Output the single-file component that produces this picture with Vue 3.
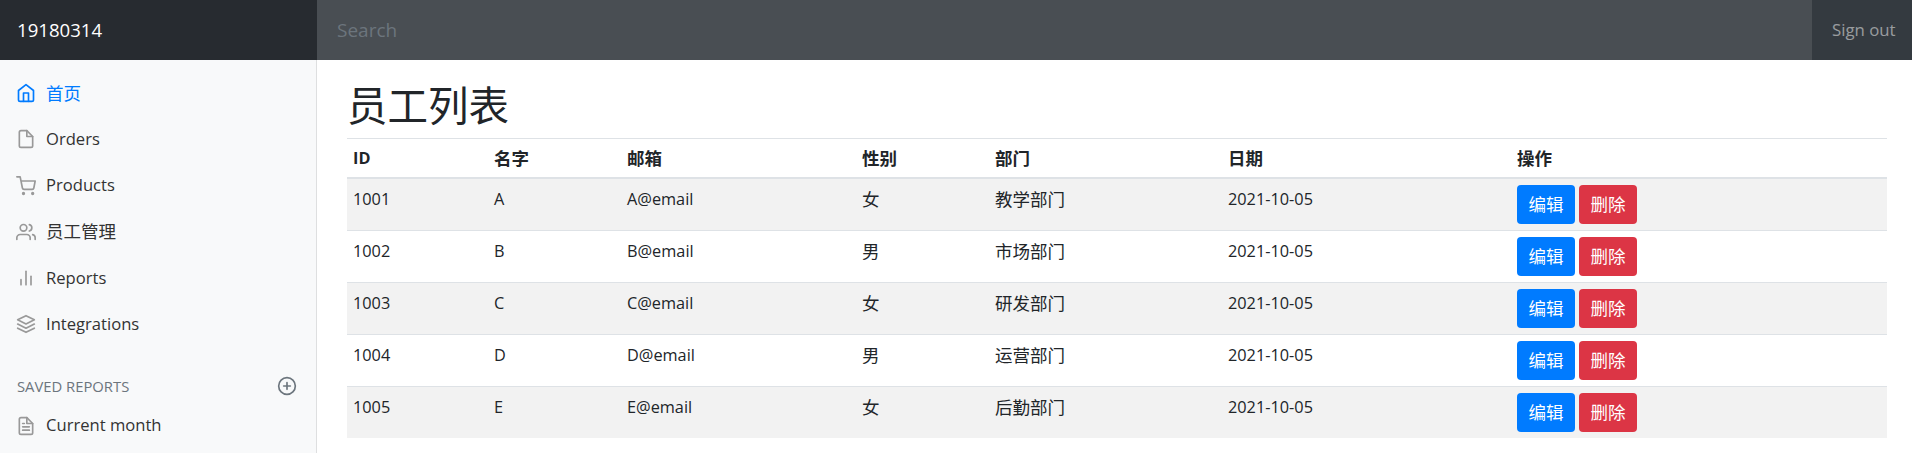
<template>
  <div class="page">
    <header class="navbar">
      <a class="brand">19180314</a>
      <input class="search" type="text" placeholder="Search" />
      <a class="signout">Sign out</a>
    </header>
    <div class="body-row">
      <nav class="sidebar">
        <ul class="nav">
          <li v-for="item in navItems" :key="item.label" class="nav-link" :class="{ active: item.active }">
            <svg class="icon" viewBox="0 0 24 24" v-html="icons[item.icon]"></svg>
            <span :class="{ cjk: item.cjk }">{{ item.label }}</span>
          </li>
        </ul>
        <h6 class="sidebar-heading">
          <span>Saved reports</span>
          <svg class="icon add" viewBox="0 0 24 24" v-html="icons.plus"></svg>
        </h6>
        <ul class="nav">
          <li class="nav-link">
            <svg class="icon" viewBox="0 0 24 24" v-html="icons.fileText"></svg>
            <span>Current month</span>
          </li>
        </ul>
      </nav>
      <main class="main">
        <h2 class="title">员工列表</h2>
        <table class="table">
          <colgroup>
            <col v-for="w in colWidths" :key="w.key" :style="{ width: w.value + 'px' }" />
          </colgroup>
          <thead>
            <tr>
              <th>ID</th>
              <th class="cjk">名字</th>
              <th class="cjk">邮箱</th>
              <th class="cjk">性别</th>
              <th class="cjk">部门</th>
              <th class="cjk">日期</th>
              <th class="cjk">操作</th>
            </tr>
          </thead>
          <tbody>
            <tr v-for="row in employees" :key="row.id">
              <td>{{ row.id }}</td>
              <td>{{ row.name }}</td>
              <td>{{ row.email }}</td>
              <td class="cjk">{{ row.gender }}</td>
              <td class="cjk">{{ row.dept }}</td>
              <td>{{ row.date }}</td>
              <td class="actions">
                <button class="btn primary">编辑</button>
                <button class="btn danger">删除</button>
              </td>
            </tr>
          </tbody>
        </table>
      </main>
    </div>
  </div>
</template>

<script setup>
const fileBase = '<path d="M13 2H6a2 2 0 0 0-2 2v16a2 2 0 0 0 2 2h12a2 2 0 0 0 2-2V9z"/><polyline points="13 2 13 9 20 9"/>'

const icons = {
  home: '<path d="M3 9l9-7 9 7v11a2 2 0 0 1-2 2H5a2 2 0 0 1-2-2z"/><polyline points="9 22 9 12 15 12 15 22"/>',
  file: fileBase,
  cart: '<circle cx="9" cy="21" r="1"/><circle cx="20" cy="21" r="1"/><path d="M1 1h4l2.68 13.39a2 2 0 0 0 2 1.61h9.72a2 2 0 0 0 2-1.61L23 6H6"/>',
  users: '<path d="M17 21v-2a4 4 0 0 0-4-4H5a4 4 0 0 0-4 4v2"/><circle cx="9" cy="7" r="4"/><path d="M23 21v-2a4 4 0 0 0-3-3.87"/><path d="M16 3.13a4 4 0 0 1 0 7.75"/>',
  bars: '<line x1="18" y1="20" x2="18" y2="10"/><line x1="12" y1="20" x2="12" y2="4"/><line x1="6" y1="20" x2="6" y2="14"/>',
  layers: '<polygon points="12 2 2 7 12 12 22 7 12 2"/><polyline points="2 17 12 22 22 17"/><polyline points="2 12 12 17 22 12"/>',
  plus: '<circle cx="12" cy="12" r="10"/><line x1="12" y1="8" x2="12" y2="16"/><line x1="8" y1="12" x2="16" y2="12"/>',
  fileText: fileBase + '<line x1="16" y1="13" x2="8" y2="13"/><line x1="16" y1="17" x2="8" y2="17"/><polyline points="10 9 9 9 8 9"/>'
}

const navItems = [
  { label: '首页', icon: 'home', active: true, cjk: true },
  { label: 'Orders', icon: 'file' },
  { label: 'Products', icon: 'cart' },
  { label: '员工管理', icon: 'users', cjk: true },
  { label: 'Reports', icon: 'bars' },
  { label: 'Integrations', icon: 'layers' }
]

const colWidths = [141, 133, 235, 133, 233, 289, 376].map((value, key) => ({ key, value }))

const employees = [
  { id: 1001, name: 'A', email: 'A@email', gender: '女', dept: '教学部门', date: '2021-10-05' },
  { id: 1002, name: 'B', email: 'B@email', gender: '男', dept: '市场部门', date: '2021-10-05' },
  { id: 1003, name: 'C', email: 'C@email', gender: '女', dept: '研发部门', date: '2021-10-05' },
  { id: 1004, name: 'D', email: 'D@email', gender: '男', dept: '运营部门', date: '2021-10-05' },
  { id: 1005, name: 'E', email: 'E@email', gender: '女', dept: '后勤部门', date: '2021-10-05' }
]
</script>

<style>
html,
body {
  margin: 0;
  overflow: hidden;
}
</style>

<style scoped>
.page {
  height: 100vh;
  display: flex;
  flex-direction: column;
  font-family: "Open Sans", "Noto Sans CJK SC", sans-serif;
  color: #212529;
}

.navbar {
  height: 60px;
  flex: none;
  display: flex;
  background: #343a40;
}

.brand {
  width: 317px;
  flex: none;
  box-sizing: border-box;
  padding-left: 17px;
  line-height: 60px;
  font-size: 18.6px;
  color: #fff;
  background: #272b30;
}

.search {
  flex: 1;
  min-width: 0;
  border: 0;
  outline: 0;
  padding: 0 20px;
  font: inherit;
  font-size: 19px;
  color: #fff;
  background: #494e53;
}

.search::placeholder {
  color: #6c757d;
}

.signout {
  width: 100px;
  flex: none;
  box-sizing: border-box;
  padding-left: 20px;
  line-height: 60px;
  font-size: 16.8px;
  color: rgba(255, 255, 255, 0.5);
}

.body-row {
  flex: 1;
  display: flex;
  min-height: 0;
}

.sidebar {
  width: 317px;
  flex: none;
  box-sizing: border-box;
  padding-top: 10px;
  background: #f8f9fa;
  box-shadow: inset -1px 0 0 rgba(0, 0, 0, 0.1);
}

.nav {
  list-style: none;
  margin: 0;
  padding: 0;
}

.nav-link {
  display: flex;
  align-items: center;
  height: 46.25px;
  padding-left: 16px;
  font-size: 16.6px;
  font-weight: 500;
  color: #333;
}

.nav-link span {
  padding-bottom: 2px;
}

.nav-link .cjk {
  font-size: 17.5px;
  font-weight: 400;
}

.nav-link.active {
  color: #007bff;
}

.icon {
  width: 20px;
  height: 20px;
  flex: none;
  margin-right: 10px;
  fill: none;
  stroke: #999;
  stroke-width: 2;
  stroke-linecap: round;
  stroke-linejoin: round;
}

.nav-link.active .icon {
  stroke: currentColor;
}

.sidebar-heading {
  display: flex;
  align-items: center;
  justify-content: space-between;
  margin: 27.5px 20px 5px 17px;
  font-size: 14.8px;
  font-weight: 400;
  line-height: 22.5px;
  text-transform: uppercase;
  color: #6c757d;
}

.icon.add {
  margin-right: 0;
  stroke: #6c757d;
}

.main {
  flex: 1;
  min-width: 0;
  padding: 0 25px 0 30px;
}

.title {
  margin: 22px 0 8px;
  font-size: 40.5px;
  font-weight: 400;
  line-height: 48px;
}

.table {
  width: 100%;
  table-layout: fixed;
  border-collapse: separate;
  border-spacing: 0;
  font-size: 16.3px;
}

.table th {
  padding: 6px;
  height: 26px;
  text-align: left;
  font-weight: 700;
  font-size: 16.3px;
  line-height: 26px;
  border-top: 1px solid #dee2e6;
  border-bottom: 2px solid #dee2e6;
}

.table th.cjk {
  font-size: 17.5px;
}

.table td {
  padding: 7px 6px 5px;
  line-height: 26px;
  vertical-align: top;
  border-top: 1px solid #dee2e6;
}

.table td.cjk {
  font-size: 17.5px;
}

.table td.actions {
  padding: 6px;
}

.table tbody tr:first-child td {
  border-top: 0;
}

.table tbody tr:nth-child(odd) {
  background: #f2f2f2;
}

.actions {
  display: flex;
  gap: 4px;
}

.btn {
  box-sizing: border-box;
  width: 58px;
  height: 39px;
  padding: 0 0 2px;
  border: 0;
  border-radius: 4px;
  font-family: inherit;
  font-size: 17.5px;
  color: #fff;
}

.btn.primary {
  background: #007bff;
}

.btn.danger {
  background: #dc3545;
}
</style>
